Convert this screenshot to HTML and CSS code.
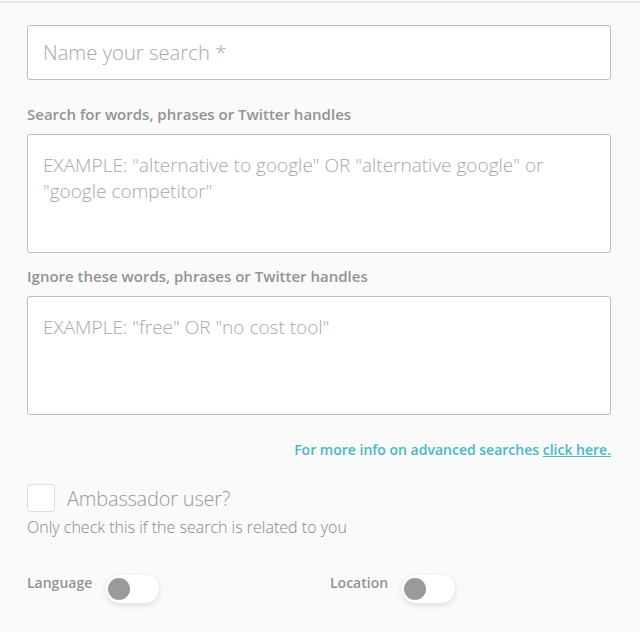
FILE: index.html
```html
<!DOCTYPE html>
<html lang="en">
<head>
  <meta charset="UTF-8">
  <meta name="viewport" content="width=device-width, initial-scale=1.0">
  <title>New Search</title>
  <link rel="stylesheet" href="styles.css">
</head>
<body>
  <div class="panel">
    <form class="search-form">
      <input type="text" class="field name-field" placeholder="Name your search *">

      <label class="field-label first" for="include">Search for words, phrases or Twitter handles</label>
      <textarea id="include" class="field area" placeholder='EXAMPLE: "alternative to google" OR "alternative google" or "google competitor"'></textarea>

      <label class="field-label" for="exclude">Ignore these words, phrases or Twitter handles</label>
      <textarea id="exclude" class="field area" placeholder='EXAMPLE: "free" OR "no cost tool"'></textarea>

      <p class="info">For more info on advanced searches <a href="#">click here.</a></p>

      <label class="check-row">
        <span class="check-box"></span>
        <span class="check-text">Ambassador user?</span>
      </label>
      <p class="hint">Only check this if the search is related to you</p>

      <div class="toggles">
        <div class="toggle-item">
          <span class="toggle-label">Language</span>
          <span class="switch"><span class="knob"></span></span>
        </div>
        <div class="toggle-item">
          <span class="toggle-label">Location</span>
          <span class="switch"><span class="knob"></span></span>
        </div>
      </div>
    </form>
  </div>
</body>
</html>
```

FILE: styles.css
```css
body {
  margin: 0;
  background: #fafafa;
  font-family: 'Open Sans', 'Noto Sans', sans-serif;
  color: #999;
}
.panel {
  border-top: 2px solid #e6e6e6;
  margin-top: 1px;
  padding: 22px 29px 20px 27px;
}
.search-form {
  display: flex;
  flex-direction: column;
}
.field {
  box-sizing: border-box;
  width: 100%;
  background: #fff;
  border: 1px solid #bdbdbd;
  border-radius: 3px;
  font-family: inherit;
  color: #555;
  outline: none;
}
.field::placeholder {
  color: #a8a8a8;
  font-weight: 300;
}
.name-field {
  height: 55px;
  padding: 0 15px 1px;
  font-size: 20.3px;
}
.field-label {
  margin: 13px 0 10px;
  font-size: 15px;
  font-weight: 600;
  color: #939393;
  line-height: 20px;
}
.field-label.first {
  margin-top: 24px;
}
.area {
  height: 119px;
  padding: 17px 15px;
  font-size: 19px;
  line-height: 26px;
  resize: none;
}
.info {
  margin: 25px 0 0;
  text-align: right;
  font-size: 14px;
  font-weight: 600;
  color: #46b9c5;
  line-height: 20px;
}
.info a {
  color: #46b9c5;
}
.check-row {
  display: flex;
  align-items: center;
  gap: 12px;
  margin-top: 24px;
}
.check-box {
  width: 26px;
  height: 26px;
  border: 1px solid #dedede;
  border-radius: 3px;
  background: #fff;
}
.check-text {
  font-size: 20px;
  font-weight: 300;
  color: #999;
  letter-spacing: -0.2px;
}
.hint {
  margin: 3px 0 0;
  font-size: 16px;
  font-weight: 300;
  color: #888;
  line-height: 24px;
}
.toggles {
  display: grid;
  grid-template-columns: 303px 1fr;
  margin-top: 34px;
}
.toggle-item {
  display: flex;
  align-items: flex-start;
  gap: 14px;
}
.toggle-label {
  font-size: 14px;
  font-weight: 600;
  color: #939393;
  line-height: 20px;
}
.switch {
  display: flex;
  align-items: center;
  width: 53px;
  height: 28px;
  margin-top: 2px;
  padding-left: 2px;
  box-sizing: border-box;
  background: #fff;
  border-radius: 14px;
  box-shadow: 0 2px 6px rgba(0, 0, 0, 0.12);
}
.knob {
  width: 22px;
  height: 22px;
  border-radius: 50%;
  background: #9a9a9a;
}
```
